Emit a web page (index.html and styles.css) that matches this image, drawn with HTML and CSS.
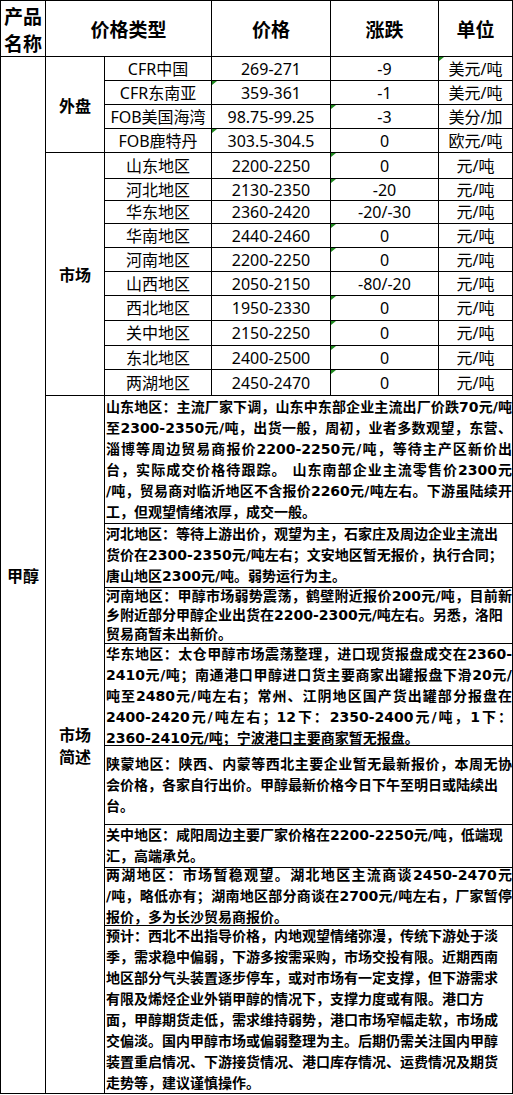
FILE: index.html
```html
<!DOCTYPE html>
<html lang="zh-CN">
<head>
<meta charset="utf-8">
<title>甲醇价格</title>
<link rel="stylesheet" href="styles.css">
</head>
<body>
<div class="sheet">
  <div class="cell hd hd-name">产品<br>名称</div>
  <div class="cell hd hd-type">价格类型</div>
  <div class="cell hd">价格</div>
  <div class="cell hd">涨跌</div>
  <div class="cell hd">单位</div>

  <div class="cell lab lab-prod">甲醇</div>
  <div class="cell lab lab-wai">外盘</div>
  <div class="cell lab lab-mkt">市场</div>
  <div class="cell lab lab-desc">市场<br>简述</div>

  <div class="cell v">CFR中国</div>
  <div class="cell v">269-271</div>
  <div class="cell v">-9</div>
  <div class="cell v tri">美元/吨</div>

  <div class="cell v">CFR东南亚</div>
  <div class="cell v tri">359-361</div>
  <div class="cell v">-1</div>
  <div class="cell v">美元/吨</div>

  <div class="cell v">FOB美国海湾</div>
  <div class="cell v">98.75-99.25</div>
  <div class="cell v tri">-3</div>
  <div class="cell v">美分/加</div>

  <div class="cell v">FOB鹿特丹</div>
  <div class="cell v tri">303.5-304.5</div>
  <div class="cell v">0</div>
  <div class="cell v">欧元/吨</div>

  <div class="cell v">山东地区</div>
  <div class="cell v">2200-2250</div>
  <div class="cell v tri">0</div>
  <div class="cell v">元/吨</div>

  <div class="cell v">河北地区</div>
  <div class="cell v">2130-2350</div>
  <div class="cell v tri">-20</div>
  <div class="cell v">元/吨</div>

  <div class="cell v">华东地区</div>
  <div class="cell v">2360-2420</div>
  <div class="cell v">-20/-30</div>
  <div class="cell v">元/吨</div>

  <div class="cell v">华南地区</div>
  <div class="cell v">2440-2460</div>
  <div class="cell v tri">0</div>
  <div class="cell v">元/吨</div>

  <div class="cell v">河南地区</div>
  <div class="cell v">2200-2250</div>
  <div class="cell v tri">0</div>
  <div class="cell v">元/吨</div>

  <div class="cell v">山西地区</div>
  <div class="cell v">2050-2150</div>
  <div class="cell v">-80/-20</div>
  <div class="cell v">元/吨</div>

  <div class="cell v">西北地区</div>
  <div class="cell v">1950-2330</div>
  <div class="cell v tri">0</div>
  <div class="cell v">元/吨</div>

  <div class="cell v">关中地区</div>
  <div class="cell v">2150-2250</div>
  <div class="cell v tri">0</div>
  <div class="cell v">元/吨</div>

  <div class="cell v">东北地区</div>
  <div class="cell v">2400-2500</div>
  <div class="cell v tri">0</div>
  <div class="cell v">元/吨</div>

  <div class="cell v">两湖地区</div>
  <div class="cell v">2450-2470</div>
  <div class="cell v tri">0</div>
  <div class="cell v">元/吨</div>

  <div class="cell note">
    <div class="l j">山东地区：主流厂家下调，山东中东部企业主流出厂价跌70元/吨</div>
    <div class="l j">至2300-2350元/吨，出货一般，周初，业者多数观望，东营、</div>
    <div class="l j">淄博等周边贸易商报价2200-2250元/吨，等待主产区新价出</div>
    <div class="l j">台，实际成交价格待跟踪。 山东南部企业主流零售价2300元</div>
    <div class="l j">/吨，贸易商对临沂地区不含报价2260元/吨左右。下游虽陆续开</div>
    <div class="l">工，但观望情绪浓厚，成交一般。</div>
  </div>
  <div class="cell note">
    <div class="l">河北地区：等待上游出价，观望为主，石家庄及周边企业主流出</div>
    <div class="l">货价在2300-2350元/吨左右；文安地区暂无报价，执行合同；</div>
    <div class="l">唐山地区2300元/吨。弱势运行为主。</div>
  </div>
  <div class="cell note tight">
    <div class="l j">河南地区：甲醇市场弱势震荡，鹤壁附近报价200元/吨，目前新</div>
    <div class="l">乡附近部分甲醇企业出货在2200-2300元/吨左右。另悉，洛阳</div>
    <div class="l">贸易商暂未出新价。</div>
  </div>
  <div class="cell note top">
    <div class="l j">华东地区：太仓甲醇市场震荡整理，进口现货报盘成交在2360-</div>
    <div class="l j">2410元/吨；南通港口甲醇进口货主要商家出罐报盘下滑20元/</div>
    <div class="l j">吨至2480元/吨左右；常州、江阴地区国产货出罐部分报盘在</div>
    <div class="l j">2400-2420元/吨左右；12下：2350-2400元/吨，1下：</div>
    <div class="l">2360-2410元/吨；宁波港口主要商家暂无报盘。</div>
  </div>
  <div class="cell note">
    <div class="l j">陕蒙地区：陕西、内蒙等西北主要企业暂无最新报价，本周无协</div>
    <div class="l">会价格，各家自行出价。甲醇最新价格今日下午至明日或陆续出</div>
    <div class="l">台。</div>
  </div>
  <div class="cell note">
    <div class="l">关中地区：咸阳周边主要厂家价格在2200-2250元/吨，低端现</div>
    <div class="l">汇，高端承兑。</div>
  </div>
  <div class="cell note">
    <div class="l j">两湖地区：市场暂稳观望。湖北地区主流商谈2450-2470元</div>
    <div class="l j">/吨，略低亦有；湖南地区部分商谈在2700元/吨左右，厂家暂停</div>
    <div class="l">报价，多为长沙贸易商报价。</div>
  </div>
  <div class="cell note">
    <div class="l">预计：西北不出指导价格，内地观望情绪弥漫，传统下游处于淡</div>
    <div class="l">季，需求稳中偏弱，下游多按需采购，市场交投有限。近期西南</div>
    <div class="l">地区部分气头装置逐步停车，或对市场有一定支撑，但下游需求</div>
    <div class="l">有限及烯烃企业外销甲醇的情况下，支撑力度或有限。港口方</div>
    <div class="l">面，甲醇期货走低，需求维持弱势，港口市场窄幅走软，市场成</div>
    <div class="l">交偏淡。国内甲醇市场或偏弱整理为主。后期仍需关注国内甲醇</div>
    <div class="l">装置重启情况、下游接货情况、港口库存情况、运费情况及期货</div>
    <div class="l">走势等，建议谨慎操作。</div>
  </div>
</div>
</body>
</html>
```

FILE: styles.css
```css
html, body {
  margin: 0;
  padding: 0;
  background: #ffffff;
}

.sheet {
  width: 513px;
  box-sizing: border-box;
  display: grid;
  grid-template-columns: 44px 58px 106px 118px 107px 73px;
  grid-template-rows: 55px 23px 23px 23px 23px 25px 21px 22px 23px 23px 23px 24px 24px 23px 25px 127px 63px 55px 101px 78px 42px 57px 167px;
  gap: 1px;
  padding: 1px;
  background: #000000;
  color: #000000;
}

.cell {
  background: #ffffff;
  display: flex;
  align-items: center;
  justify-content: center;
  text-align: center;
  overflow: hidden;
  position: relative;
}

.hd {
  font-family: "Noto Sans CJK SC", sans-serif;
  font-weight: 700;
  font-size: 19px;
  line-height: 27px;
}

.hd-type {
  grid-column: span 2;
}

.lab {
  font-family: "Noto Sans CJK SC", sans-serif;
  font-weight: 700;
  font-size: 16px;
  line-height: 22px;
}

.lab-prod {
  grid-column: 1;
  grid-row: 2 / 24;
}

.lab-wai {
  grid-column: 2;
  grid-row: 2 / 6;
}

.lab-mkt {
  grid-column: 2;
  grid-row: 6 / 16;
}

.lab-desc {
  grid-column: 2;
  grid-row: 16 / 24;
}

.v {
  font-family: "Noto Sans", "Noto Sans CJK SC", sans-serif;
  font-size: 16px;
  line-height: 20px;
  white-space: nowrap;
}

.tri::before {
  content: "";
  position: absolute;
  left: 0;
  top: 0;
  width: 0;
  height: 0;
  border-top: 4px solid #1f8a1f;
  border-right: 5px solid transparent;
}

.note {
  grid-column: 3 / 7;
  flex-direction: column;
  align-items: stretch;
  justify-content: center;
  padding-left: 1px;
  font-family: "DejaVu Sans", "Noto Sans CJK SC", sans-serif;
  font-weight: 700;
  font-size: 14px;
  text-align: left;
}

.note.top {
  justify-content: flex-start;
}

.l {
  flex: none;
  height: 21px;
  line-height: 21px;
  text-align: left;
  white-space: nowrap;
}

.note.tight .l {
  height: 19px;
  line-height: 19px;
}

.l.j {
  text-align: justify;
  text-align-last: justify;
  white-space: normal;
}
```
